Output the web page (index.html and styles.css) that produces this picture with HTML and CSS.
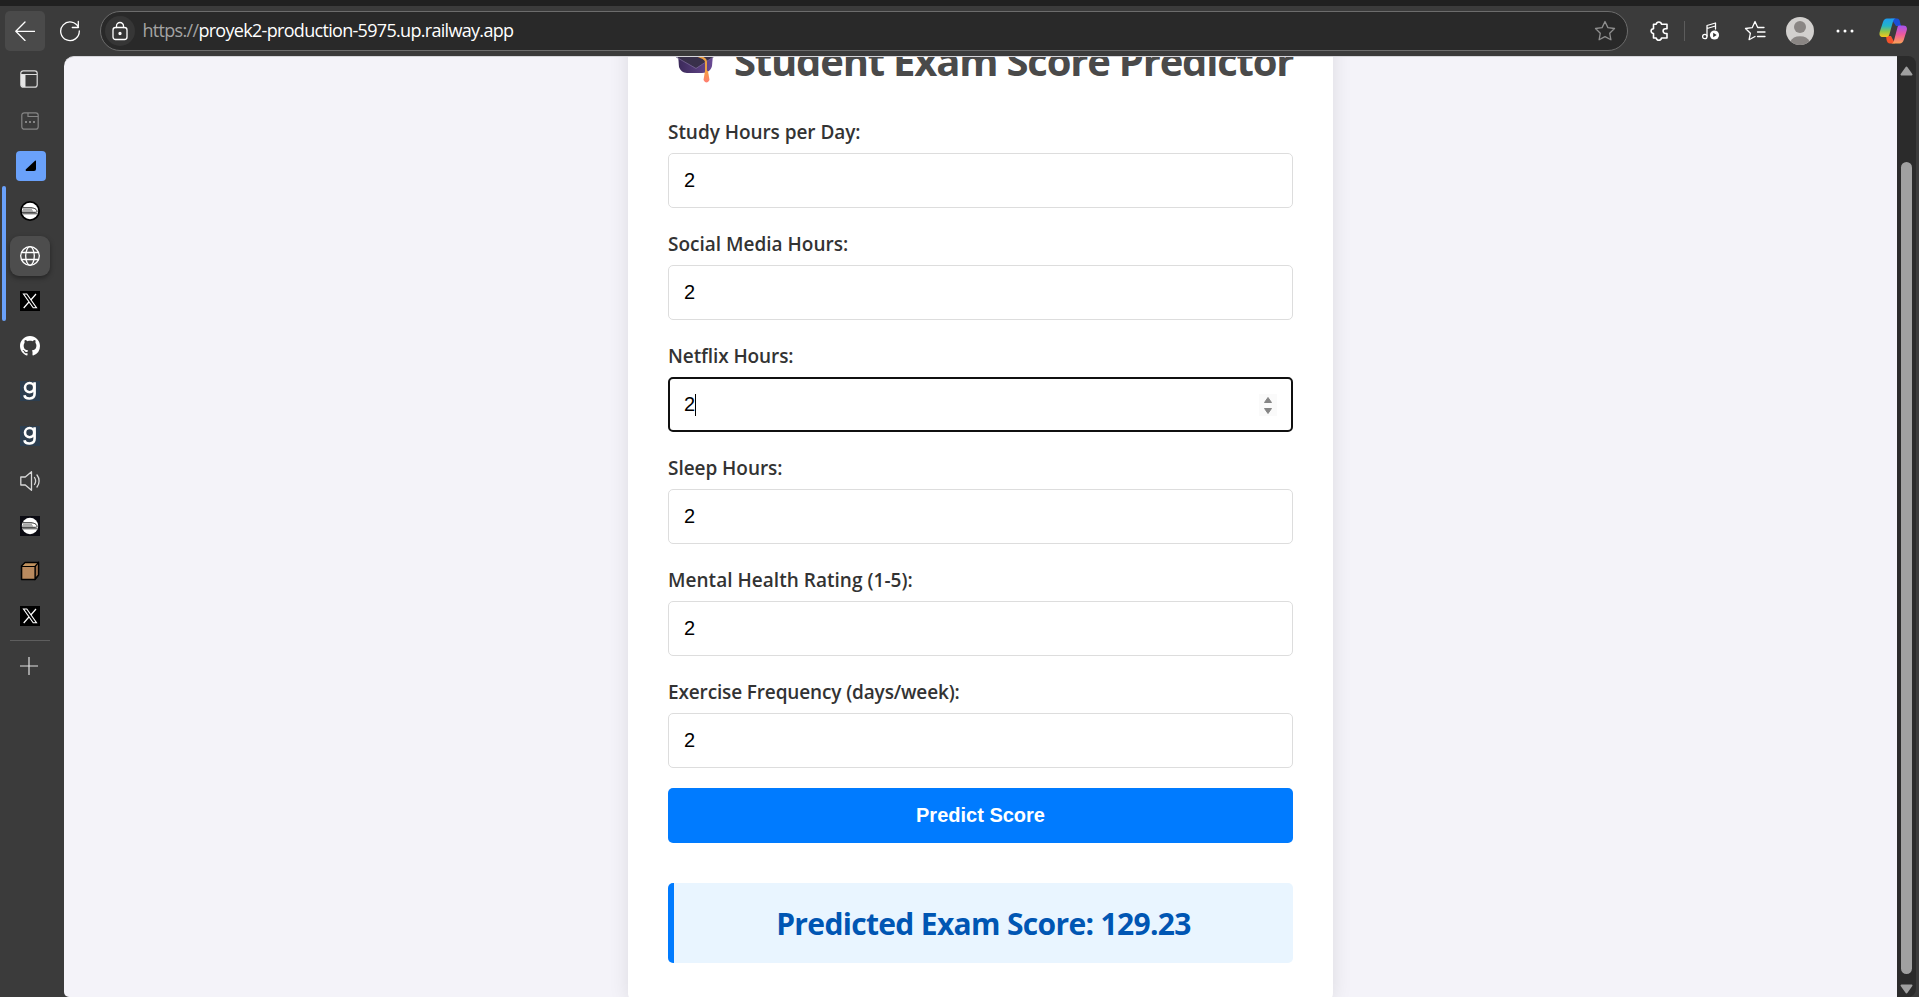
FILE: index.html
```
<!DOCTYPE html>
<html lang="en">
<head>
<meta charset="utf-8">
<title>Student Exam Score Predictor</title>
<link rel="stylesheet" href="styles.css">
</head>
<body>
<svg width="0" height="0" class="defs">
  <defs>
    <linearGradient id="cpA" x1="0" y1="0" x2="0" y2="1"><stop offset="0" stop-color="#1f9df0"/><stop offset=".4" stop-color="#23b4c8"/><stop offset=".7" stop-color="#8fc54a"/><stop offset="1" stop-color="#f6c81c"/></linearGradient>
    <linearGradient id="cpB" x1="0" y1="0" x2="0" y2="1"><stop offset="0" stop-color="#a452f0"/><stop offset=".5" stop-color="#ec5a9c"/><stop offset="1" stop-color="#fba355"/></linearGradient>
    <linearGradient id="cap" x1="0" y1="0" x2="1" y2="0"><stop offset="0" stop-color="#3a2958"/><stop offset="1" stop-color="#6a4a94"/></linearGradient>
    <linearGradient id="tassel" x1="0" y1="0" x2="0" y2="1"><stop offset="0" stop-color="#f7a03c"/><stop offset="1" stop-color="#ff7d74"/></linearGradient>
    <symbol id="x" viewBox="0 0 20 20"><path fill="#000" d="M0 0h20v20H0z"/><path d="M3.500 3h3.300l9.700 13.800h-3.300z" fill="none" stroke="#fff" stroke-width="1.100"/><path d="M16 3l-5.200 6M8.900 11l-5.200 6" stroke="#fff" stroke-width="1.200"/></symbol>
    <symbol id="train" viewBox="0 0 20 20"><circle cx="10" cy="10" r="8.200" fill="#fff"/><path d="M2.500 6.800h8.500c3.500.100 6 1.700 6 3.500 0 .700-.600 1-1.500 1H2" fill="none" stroke="#1a1a1a" stroke-width="1"/><path d="M3 8.800h9M2 10h11" stroke="#777" stroke-width=".900"/><path d="M2.200 12.600h15.500" stroke="#777" stroke-width="1.600"/></symbol>
    <symbol id="g" viewBox="0 0 20 20"><path fill="#2c3e50" d="M0 0h20v20H0z"/><circle cx="9.600" cy="6.600" r="4.600" fill="none" stroke="#fff" stroke-width="2.600"/><path d="M14.600 1.200v11.600c0 6-9.200 6-10.200 1.400" fill="none" stroke="#fff" stroke-width="2.600"/></symbol>
  </defs>
</svg>
<div class="browser">
  <header class="toolbar">
    <div class="back"><svg width="20" height="20" viewBox="0 0 20 20" class="ln"><path d="M20 10.300H1M10 1L.800 10.300 10 19.500"/></svg></div>
    <svg class="reload ln" width="22" height="22" viewBox="0 0 22 22"><path d="M19.500 7.500A9.300 9.300 0 1 0 20.300 11M19.300 1.500v6h-6"/></svg>
    <div class="address">
      <span class="lock"><svg width="18" height="20" viewBox="0 0 18 20" class="ln"><rect x="2" y="6.500" width="14" height="12" rx="2.500"/><path d="M5.500 6.500V5a3.500 3.500 0 0 1 7 0v1.500"/><circle cx="9" cy="12.500" r="1" fill="#fff"/></svg></span>
      <span class="url"><span class="scheme">https://</span>proyek2-production-5975.up.railway.app</span>
      <svg class="star" width="22" height="22" viewBox="0 0 22 22"><path d="M11 1.500l2.900 6.100 6.600.900-4.800 4.700 1.200 6.600-5.900-3.200-5.900 3.200 1.200-6.600L1.500 8.500l6.600-.900z"/></svg>
    </div>
    <div class="actions">
      <svg width="20" height="22" viewBox="0 0 20 22" class="ln thick"><path d="M4.500 4.200h2.700a2.700 2.700 0 0 1 5.300 0h5.500v4.500h-1.500a2.400 2.400 0 0 0 0 4.800H18V18h-5.500a2.700 2.700 0 0 1-5.300 0H4.500v-4.500a2.400 2.400 0 0 1 0-4.800z"/></svg>
      <i class="divider"></i>
      <svg class="a-music ln" width="18" height="20" viewBox="0 0 18 20"><circle cx="2.800" cy="15.500" r="2.200"/><path d="M5 15V4.500L13.500 2v6M5 7.500l8.500-2.500"/><circle cx="12.500" cy="14" r="4.600" fill="#fff" stroke="none"/><path d="M11.200 11.800v4.400l3.500-2.200z" fill="#333" stroke="none"/></svg>
      <svg class="a-fav ln" width="22" height="22" viewBox="0 0 22 22"><path d="M20 7.500h-6.300L11 1.500 8.200 7.700l-6.700.800 4.900 4.700-1.300 6.500L11 16.500M13.500 12H21M13.500 16.500H21"/></svg>
      <svg class="a-user" width="28" height="28" viewBox="0 0 28 28"><circle cx="14" cy="14" r="14" fill="#d2d0ce"/><circle cx="14" cy="10" r="6" fill="#8a8684"/><path d="M4.500 24.300a10 7.500 0 0 1 19 0A14 14 0 0 1 4.500 24.300z" fill="#8a8684"/></svg>
      <svg class="a-more" width="18" height="6" viewBox="0 0 18 6" fill="#fff"><circle cx="2" cy="3" r="1.500"/><circle cx="9" cy="3" r="1.500"/><circle cx="16" cy="3" r="1.500"/></svg>
      <svg class="a-copilot" width="28" height="28" viewBox="0 0 28 28"><path d="M12 1.500h6c2 0 2.500 1.500 3 3.500L22 9h-5z" fill="#1b4fd6"/><path d="M7 19h5l4 7.500h-5c-2 0-3-1.500-3.500-4z" fill="#f4532c"/><path d="M8 1.500h9c-1.500 0-2.500 1-3 3L10.500 17c-.500 2-1.500 3-3 3H4c-3 0-4-2-3.300-5L4 5c.700-2.300 2-3.500 4-3.500z" fill="url(#cpA)"/><path d="M20 8.500h4c3.500 0 4.500 2 3.700 5l-3 9.500c-.700 2.300-2 3.500-4 3.500H12c1.500 0 2.500-1 3-3l3.200-12c.400-2 .800-3 1.800-3z" fill="url(#cpB)"/></svg>
    </div>
  </header>
  <div class="body">
    <nav class="tabs">
      <svg class="t-panel" width="18" height="18" viewBox="0 0 18 18"><rect x=".800" y=".800" width="16.400" height="16.400" rx="2.500" fill="none" stroke="#ddd" stroke-width="1.200"/><path d="M1 4.500h16M5 4.500V17" stroke="#ddd"/><path d="M1 4.500h4V17H3a2 2 0 0 1-2-2z" fill="#e6e6e6"/></svg>
      <svg class="t-group" width="18" height="18" viewBox="0 0 18 18"><rect x=".800" y=".800" width="16.400" height="16.400" rx="2.500" fill="none" stroke="#858585" stroke-width="1.200"/><path d="M7 1v3.500h10" fill="none" stroke="#858585" stroke-width="1.200"/><path d="M4 10h2M8 10h2M12 10h2" stroke="#858585" stroke-width="2"/></svg>
      <div class="cell workspace"><span class="blue"><svg width="12" height="12" viewBox="0 0 12 12"><path d="M11 .500v8.500a2 2 0 0 1-2 2H2C.500 11 .300 10 1 9.200L10 .800z"/></svg></span></div>
      <div class="group">
        <div class="cell"><svg width="20" height="20"><circle cx="10" cy="10" r="10"/><use href="#train"/></svg></div>
        <div class="cell"><span class="active"><svg width="20" height="20" viewBox="0 0 20 20" class="ln"><circle cx="10" cy="10" r="9.300"/><ellipse cx="10" cy="10" rx="4.300" ry="9.300"/><path d="M1.500 6.500h17M1.500 13.500h17"/></svg></span></div>
        <div class="cell"><svg width="20" height="20"><use href="#x"/></svg></div>
      </div>
      <div class="cell"><svg width="20" height="20" viewBox="0 0 16 16" fill="#fff"><path d="M8 0C3.580 0 0 3.580 0 8c0 3.540 2.290 6.530 5.470 7.590.4.070.55-.17.55-.38 0-.19-.01-.82-.01-1.490-2.010.37-2.530-.49-2.690-.94-.09-.23-.48-.94-.82-1.130-.28-.15-.68-.52-.01-.53.63-.01 1.080.58 1.230.82.72 1.210 1.870.87 2.330.66.07-.52.28-.87.51-1.070-1.780-.2-3.640-.89-3.640-3.950 0-.87.31-1.590.82-2.150-.08-.2-.36-1.020.08-2.120 0 0 .67-.21 2.200.82.64-.18 1.320-.27 2-.27s1.360.09 2 .27c1.530-1.040 2.200-.82 2.200-.82.44 1.100.16 1.920.08 2.120.51.56.82 1.270.82 2.150 0 3.070-1.870 3.750-3.650 3.950.29.25.54.73.54 1.480 0 1.070-.01 1.930-.01 2.200 0 .21.15.46.55.38A8.010 8.010 0 0 0 16 8c0-4.420-3.580-8-8-8z"/></svg></div>
      <div class="cell"><svg width="20" height="20"><use href="#g"/></svg></div>
      <div class="cell"><svg width="20" height="20"><use href="#g"/></svg></div>
      <div class="cell"><svg width="20" height="20" viewBox="0 0 20 20" class="ln dim"><path d="M.800 6v8h4.500l6.200 5.300V.700L5.300 6zM14.500 6.500c1.300 2 1.300 5 0 7M17 4c2.800 3.500 2.800 8.500 0 12"/></svg></div>
      <div class="cell"><svg width="20" height="20"><path fill="#0b0b12" d="M0 0h20v20H0z"/><use href="#train"/></svg></div>
      <div class="cell"><svg width="20" height="20" viewBox="0 0 20 20"><path d="M1.500 5L5 1.500h13.500V14L15 18.500H1.500z" fill="#c2935f" stroke="#000" stroke-width="1.400" stroke-linejoin="round"/><path d="M15 5.500l3.500-4V14L15 18z" fill="#9a6e48" stroke="#000" stroke-width="1.200"/><path d="M1.700 5.500H15v12.800H1.700z" fill="#b98a5e" stroke="#000" stroke-width="1.200"/></svg></div>
      <div class="cell"><svg width="20" height="20"><use href="#x"/></svg></div>
      <hr class="rule">
      <svg class="plus" width="18" height="18" viewBox="0 0 18 18"><path d="M9 0v18M0 9h18" stroke="#e2e2e2" stroke-width="1.200"/></svg>
    </nav>
    <main class="page">
      <section class="card">
        <h1 class="title"><svg class="cap" width="42" height="44" viewBox="0 0 42 44"><path d="M4 15l1 13c1 3 4 6 8 6h15c6 0 9-3 10-7l1-12z" fill="url(#cap)"/><path d="M1 17L20 5l21 12-19 12z" fill="#38304a"/><path d="M2 18l20 11.500L40 17.500" fill="none" stroke="#75678f" stroke-width=".800"/><path d="M19 15l10 4c2 1 3 2 3 4v11" fill="none" stroke="#eba044" stroke-width="2"/><path d="M31 32q1.500-1 3 0l1.500 9q-3 5-6 0z" fill="url(#tassel)"/></svg><span class="title-text">Student Exam Score Predictor</span></h1>
        <form class="form">
          <label class="field"><span class="label study">Study Hours per Day:</span><span class="input">2</span></label>
          <label class="field"><span class="label social">Social Media Hours:</span><span class="input">2</span></label>
          <label class="field"><span class="label netflix">Netflix Hours:</span><span class="input focus">2<i class="caret"></i><svg class="spin" width="18" height="22" viewBox="0 0 18 22"><path fill="#fafafa" d="M0 0h18v22H0z"/><path fill="#858585" stroke="#858585" stroke-linejoin="round" d="M5.500 8.500h7L9 3.500zM5.500 14.500h7L9 19.500z"/></svg></span></label>
          <label class="field"><span class="label sleep">Sleep Hours:</span><span class="input">2</span></label>
          <label class="field"><span class="label mental">Mental Health Rating (1-5):</span><span class="input">2</span></label>
          <label class="field"><span class="label exercise">Exercise Frequency (days/week):</span><span class="input">2</span></label>
          <button class="submit" type="button">Predict Score</button>
        </form>
        <div class="result"><span class="result-text">Predicted Exam Score: 129.23</span></div>
      </section>
    </main>
    <div class="scrollbar">
      <svg width="13" height="10" viewBox="0 0 13 10"><path d="M1.500 8.500h10L6.500 1.500z" fill="#a0a0a0" stroke="#a0a0a0" stroke-width="2" stroke-linejoin="round"/></svg>
      <div class="thumb"></div>
      <svg width="13" height="10" viewBox="0 0 13 10"><path d="M1.500 1.500h10L6.500 8.500z" fill="#a0a0a0" stroke="#a0a0a0" stroke-width="2" stroke-linejoin="round"/></svg>
    </div>
  </div>
</div>
</body>
</html>
```
FILE: styles.css
```
* { box-sizing: border-box; }
body { margin: 0; overflow: hidden; background: #3b3b3b; font-family: "Open Sans", "Noto Sans", sans-serif; }
svg { display: block; flex: none; }
.defs { position: absolute; }
.browser { width: 1919px; height: 997px; display: flex; flex-direction: column; border-top: 6px solid #202020; }
.ln { fill: none; stroke: #fff; stroke-width: 1.3; stroke-linejoin: round; stroke-linecap: round; }
.thick { stroke-width: 1.6; }
.dim { stroke: #d8d8d8; }

.toolbar { height: 50px; flex: none; display: flex; align-items: center; padding: 0 12px 0 5px; }
.back { width: 40px; height: 40px; border-radius: 5px; background: #4a4a4a; display: flex; align-items: center; justify-content: center; }
.reload { margin: 0 19px 0 14px; }
.address { width: 1528px; height: 40px; border: 1px solid #6c6c6c; border-radius: 20px; background: #292929; display: flex; align-items: center; padding: 0 11px 0 4px; }
.lock { width: 30px; height: 30px; border-radius: 50%; background: #363636; display: flex; align-items: center; justify-content: center; margin-right: 7.5px; }
.url { color: #fff; font-size: 18px; letter-spacing: -0.69px; line-height: 24px; padding-bottom: 2px; white-space: nowrap; }
.scheme { color: #a3a3a3; }
.star { margin-left: auto; fill: none; stroke: #8e8e8e; stroke-width: 1.3; stroke-linejoin: round; }
.actions { flex: 1; display: flex; align-items: center; padding-left: 21px; }
.divider { width: 1px; height: 20px; margin-left: 15px; background: #5c5c5c; }
.a-music { margin-left: 17px; }
.a-fav { margin-left: 24px; }
.a-user { margin-left: 20px; }
.a-more { margin-left: 22px; }
.a-copilot { margin-left: 25px; }

.body { flex: 1; min-height: 0; display: flex; }
.tabs { width: 64px; flex: none; display: flex; flex-direction: column; }
.t-panel { margin: 14px 0 0 20px; }
.t-group { margin: 24px 0 13px 21px; }
.cell { width: 60px; height: 45px; display: flex; align-items: center; justify-content: center; }
.workspace { width: 62px; }
.blue { width: 30px; height: 30px; border-radius: 4px; background: #6aa1fa; display: flex; align-items: center; justify-content: center; }
.group { position: relative; }
.group::before { content: ""; position: absolute; left: 2px; top: -2px; width: 4px; height: 135px; border-radius: 2px; background: #6aa1fa; }
.active { width: 40px; height: 40px; border-radius: 9px; background: #4d4d4d; box-shadow: 0 2px 5px rgba(0, 0, 0, .4); display: flex; align-items: center; justify-content: center; }
.rule { width: 40px; height: 1px; border: 0; background: #5e5e5e; margin: 2px 0 0 10px; }
.plus { margin: 16px 0 0 20px; }

.page { flex: 1; min-width: 0; overflow: hidden; background: #f4f3f9; border-radius: 10px 0 0 5px; border-top: 1px solid #d5d5da; display: flex; justify-content: center; align-items: flex-end; }
.card { width: 705px; flex: none; height: 1050px; margin-bottom: -6px; padding: 0 40px 40px; background: #fff; border-radius: 10px; box-shadow: 0 0 20px rgba(0, 0, 0, .1); display: flex; flex-direction: column; justify-content: flex-end; }
.title { margin: 0 0 28px; height: 54px; display: flex; align-items: center; padding-left: 6px; color: #4a4a4a; font-size: 40px; font-weight: 700; line-height: 54px; white-space: nowrap; }
.cap { margin-right: 18px; }
.title-text { letter-spacing: -1.2px; }
.form { display: flex; flex-direction: column; }
.field { height: 112px; display: flex; flex-direction: column; }
.label { height: 37px; line-height: 32px; color: #333; font-size: 19px; font-weight: 600; white-space: nowrap; }
.study { letter-spacing: -0.05px; }
.social { letter-spacing: 0; }
.netflix { letter-spacing: -0.1px; }
.sleep { letter-spacing: -0.05px; }
.mental { letter-spacing: 0.03px; }
.exercise { letter-spacing: -0.14px; }
.input { position: relative; height: 55px; border: 1px solid #ddd; border-radius: 5px; background: #fff; padding-left: 15px; display: flex; align-items: center; font-family: "Liberation Sans", Arial, sans-serif; font-size: 20px; color: #000; }
.focus { border: 2px solid #101010; padding-left: 14px; }
.caret { width: 1px; height: 22px; background: #000; }
.spin { margin-left: auto; margin-right: 14px; }
.submit { height: 55px; border: 0; border-radius: 5px; background: #007bff; color: #fff; font: 700 20px "Liberation Sans", Arial, sans-serif; }
.result { margin-top: 40px; height: 80px; border-left: 6px solid #007bff; border-radius: 5px; background: #e9f5ff; display: flex; align-items: center; justify-content: center; color: #0056b3; font-size: 30px; font-weight: 700; white-space: nowrap; }
.result-text { letter-spacing: -0.67px; }

.scrollbar { width: 19px; margin-right: 3px; background: #2b2b2b; border-radius: 0 8px 8px 0; display: flex; flex-direction: column; align-items: center; padding: 10px 0 3px; }
.thumb { width: 11px; height: 812px; margin: auto 0 10px; border-radius: 6px; background: #a0a0a0; }
```
